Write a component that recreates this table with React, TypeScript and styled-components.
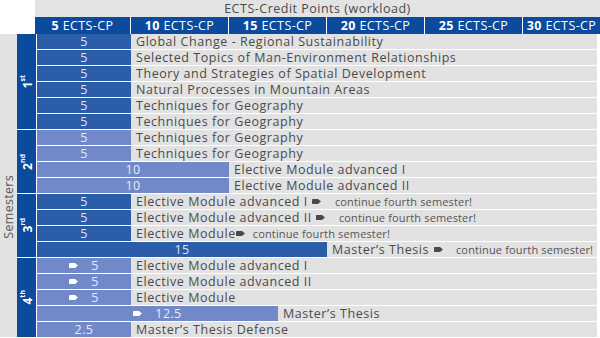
import React from "react";
import styled, { createGlobalStyle } from "styled-components";

const GlobalStyle = createGlobalStyle`
  body {
    margin: 0;
    background: #ffffff;
    font-family: "Open Sans", "DejaVu Sans", sans-serif;
  }
`;

const COL = 98;
const ROW = 16;

const Page = styled.div`
  width: 600px;
  height: 338px;
  overflow: hidden;
  background: #ffffff;
`;

const Head = styled.div`
  margin-left: 35px;
  width: 565px;
`;

const HeadTitle = styled.div`
  height: 17px;
  background: #e3e3e3;
  color: #4a4a4a;
  font-size: 12.5px;
  letter-spacing: 0.5px;
  line-height: 17px;
  text-align: center;
`;

const HeadCols = styled.div`
  display: flex;
  height: 17px;
  gap: 1px;
  background: #ffffff;
`;

const HeadCol = styled.div<{ $w?: number }>`
  flex: ${(p) => (p.$w ? `0 0 ${p.$w}px` : "1")};
  background: #0b4a9d;
  color: #ffffff;
  font-size: 12.5px;
  letter-spacing: 0.4px;
  line-height: 17px;
  text-align: center;
  white-space: nowrap;

  b {
    font-weight: 700;
  }
`;

const Body = styled.div`
  display: flex;
`;

const SemestersStrip = styled.div`
  flex: 0 0 16px;
  background: #e2e2e2;
  display: flex;
  align-items: center;
  justify-content: center;
  padding-top: 42px;
`;

const VerticalText = styled.span`
  writing-mode: vertical-rl;
  transform: rotate(180deg);
  color: #555555;
  font-size: 12.5px;
  letter-spacing: 0.3px;
`;

const Groups = styled.div`
  flex: 1;
  display: flex;
  flex-direction: column;
`;

const Group = styled.div`
  display: flex;
  border-top: 1px solid #ffffff;

  &:first-child {
    border-top: none;
  }
`;

const Tag = styled.div`
  flex: 0 0 19px;
  background: #0b4a9d;
  display: flex;
  align-items: center;
  justify-content: center;
  margin-right: 1px;
`;

const TagText = styled.span`
  writing-mode: vertical-rl;
  transform: rotate(180deg);
  color: #ffffff;
  font-weight: 700;
  font-size: 12px;

  sup {
    font-size: 7px;
    vertical-align: 5px;
  }
`;

const Rows = styled.div`
  flex: 1;
  display: flex;
  flex-direction: column;
  margin-right: 3px;
`;

const Row = styled.div`
  display: flex;
  align-items: stretch;
  height: ${ROW - 1}px;
  border-bottom: 1px solid #ffffff;
  background: #e2e2e2;

  &:last-child {
    border-bottom: none;
  }
`;

const Bar = styled.div<{ $w: number; $tone: "dark" | "light" }>`
  flex: 0 0 ${(p) => p.$w}px;
  background: ${(p) => (p.$tone === "dark" ? "#2c5da9" : "#7189c8")};
  color: ${(p) => (p.$tone === "dark" ? "#dce4f4" : "#e6ebf7")};
  font-size: 12.5px;
  letter-spacing: 0.4px;
  display: flex;
  align-items: center;
  justify-content: center;
  gap: 13px;
  margin-right: 1px;
`;

const Label = styled.div`
  display: flex;
  align-items: center;
  padding-left: 4px;
  color: #4a4a4a;
  font-size: 12.5px;
  white-space: nowrap;
  letter-spacing: 0.55px;
`;

const Note = styled.span<{ $gap: number }>`
  margin-left: ${(p) => p.$gap}px;
  color: #555555;
  font-size: 11px;
  letter-spacing: 0.15px;
`;

const ArrowIcon = ({ color, space }: { color: string; space?: number }) => (
  <svg
    width="9"
    height="5"
    viewBox="0 0 9 5"
    style={{ marginLeft: space ?? 0, flex: "0 0 auto" }}
  >
    <path d="M0.8 0 H6 L9 2.5 L6 5 H0.8 Q0 5 0 4.2 V0.8 Q0 0 0.8 0 Z" fill={color} />
  </svg>
);

type Item = {
  cp: string;
  cols: number;
  label: string;
  lead?: boolean;
  arrowSpace?: number;
  note?: number;
};

type Semester = {
  num: string;
  sup: string;
  tone: "dark" | "light";
  items: Item[];
};

const semesters: Semester[] = [
  {
    num: "1",
    sup: "st",
    tone: "dark",
    items: [
      { cp: "5", cols: 1, label: "Global Change - Regional Sustainability" },
      { cp: "5", cols: 1, label: "Selected Topics of Man-Environment Relationships" },
      { cp: "5", cols: 1, label: "Theory and Strategies of Spatial Development" },
      { cp: "5", cols: 1, label: "Natural Processes in Mountain Areas" },
      { cp: "5", cols: 1, label: "Techniques for Geography" },
      { cp: "5", cols: 1, label: "Techniques for Geography" },
    ],
  },
  {
    num: "2",
    sup: "nd",
    tone: "light",
    items: [
      { cp: "5", cols: 1, label: "Techniques for Geography" },
      { cp: "5", cols: 1, label: "Techniques for Geography" },
      { cp: "10", cols: 2, label: "Elective Module advanced I" },
      { cp: "10", cols: 2, label: "Elective Module advanced II" },
    ],
  },
  {
    num: "3",
    sup: "rd",
    tone: "dark",
    items: [
      { cp: "5", cols: 1, label: "Elective Module advanced I", arrowSpace: 4, note: 14 },
      { cp: "5", cols: 1, label: "Elective Module advanced II", arrowSpace: 4, note: 14 },
      { cp: "5", cols: 1, label: "Elective Module", arrowSpace: 0, note: 8 },
      { cp: "15", cols: 3, label: "Master\u2019s Thesis", arrowSpace: 5, note: 13 },
    ],
  },
  {
    num: "4",
    sup: "th",
    tone: "light",
    items: [
      { cp: "5", cols: 1, label: "Elective Module advanced I", lead: true },
      { cp: "5", cols: 1, label: "Elective Module advanced II", lead: true },
      { cp: "5", cols: 1, label: "Elective Module", lead: true },
      { cp: "12.5", cols: 2.5, label: "Master\u2019s Thesis", lead: true },
      { cp: "2.5", cols: 1, label: "Master\u2019s Thesis Defense" },
    ],
  },
];

const headCols = ["5", "10", "15", "20", "25", "30"];

const App: React.FC = () => {
  return (
    <Page>
      <GlobalStyle />
      <Head>
        <HeadTitle>ECTS-Credit Points (workload)</HeadTitle>
        <HeadCols>
          {headCols.map((n, i) => (
            <HeadCol
              key={n}
              $w={i === 0 ? 95 : i === headCols.length - 1 ? undefined : COL - 1}
            >
              <b>{n}</b> ECTS-CP
            </HeadCol>
          ))}
        </HeadCols>
      </Head>

      <Body>
        <SemestersStrip>
          <VerticalText>Semesters</VerticalText>
        </SemestersStrip>
        <Groups>
          {semesters.map((s) => (
            <Group key={s.num}>
              <Tag>
                <TagText>
                  {s.num}
                  <sup>{s.sup}</sup>
                </TagText>
              </Tag>
              <Rows>
                {s.items.map((it, i) => (
                  <Row key={i}>
                    <Bar $w={it.cols * COL - 4} $tone={s.tone}>
                      {it.lead && <ArrowIcon color="#ffffff" />}
                      <span>{it.cp}</span>
                    </Bar>
                    <Label>
                      {it.label}
                      {it.note !== undefined && (
                        <>
                          <ArrowIcon color="#4a4a4a" space={it.arrowSpace} />
                          <Note $gap={it.note}>continue fourth semester!</Note>
                        </>
                      )}
                    </Label>
                  </Row>
                ))}
              </Rows>
            </Group>
          ))}
        </Groups>
      </Body>
    </Page>
  );
};

export default App;
